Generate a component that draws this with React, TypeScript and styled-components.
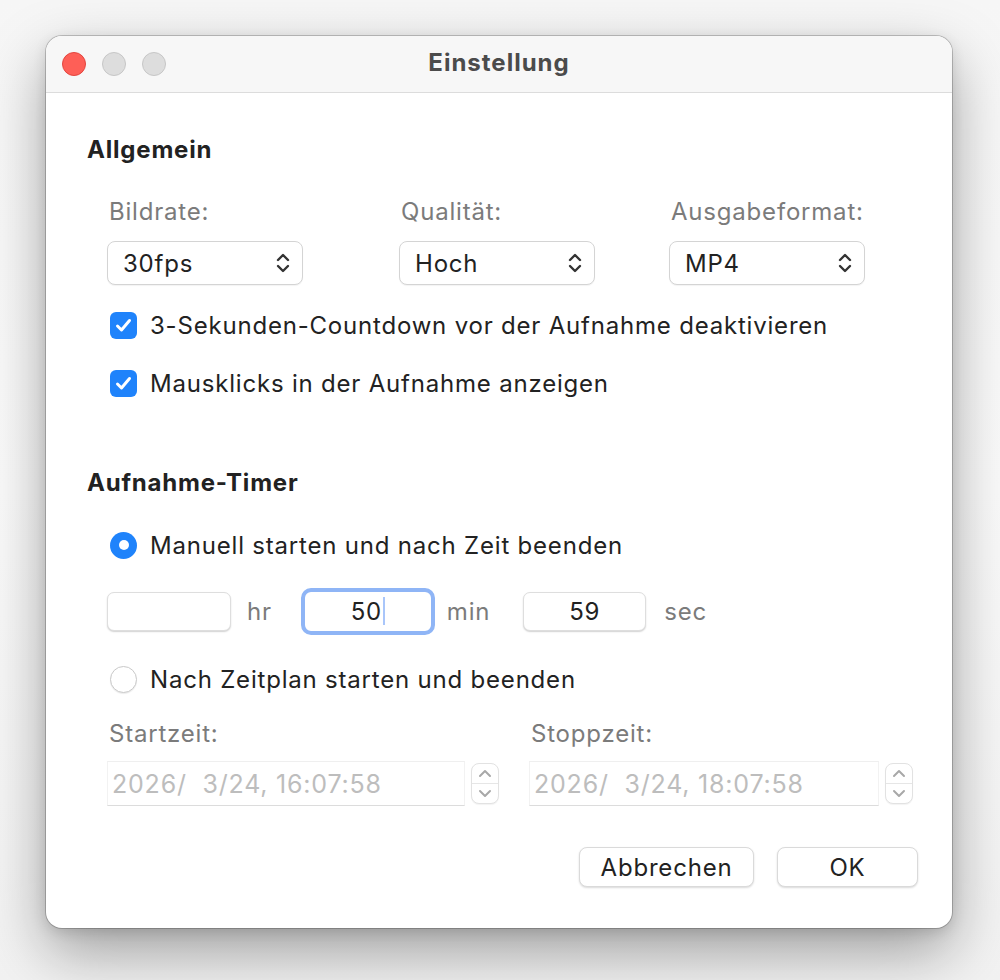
import React from 'react';
import styled, { createGlobalStyle } from 'styled-components';

const GlobalStyle = createGlobalStyle`
  html, body {
    margin: 0;
    padding: 0;
    background: #ffffff;
  }
  body {
    font-family: Inter, "Noto Sans", "Liberation Sans", sans-serif;
    color: #222;
    letter-spacing: 0.8px;
  }
`;

const Page = styled.div`
  padding: 36px 48px 0 46px;
  width: 1000px;
  height: 980px;
  box-sizing: border-box;
  background: linear-gradient(180deg, #f6f6f6 0%, #fafafa 50%, #f2f2f2 100%);
`;

const Window = styled.div`
  width: 906px;
  height: 892px;
  box-sizing: border-box;
  background: #fff;
  border-radius: 16px;
  box-shadow: 0 0 0 1px rgba(0, 0, 0, 0.2), 0 24px 60px rgba(0, 0, 0, 0.35), 0 4px 14px rgba(0, 0, 0, 0.12);
  overflow: hidden;
  display: flex;
  flex-direction: column;
`;

const TitleBar = styled.div`
  height: 56px;
  flex: none;
  background: #f7f7f7;
  border-bottom: 1px solid #dcdcdc;
  display: grid;
  grid-template-columns: 1fr auto 1fr;
  align-items: center;
  padding: 0 16px;
`;

const Lights = styled.div`
  display: flex;
  gap: 16px;
`;

const Light = styled.span<{ $color: string; $edge: string }>`
  width: 24px;
  height: 24px;
  border-radius: 50%;
  box-sizing: border-box;
  background: ${p => p.$color};
  border: 1px solid ${p => p.$edge};
`;

const Title = styled.div`
  font-size: 24px;
  font-weight: 700;
  color: #4b4b4b;
  letter-spacing: 1px;
  margin-top: -3px;
`;

const Body = styled.div`
  padding: 43px 34px 0 41px;
  display: flex;
  flex-direction: column;
`;

const SectionHeading = styled.div<{ $top?: number }>`
  font-size: 24px;
  line-height: 28px;
  font-weight: 700;
  color: #222;
  margin-top: ${p => p.$top ?? 0}px;
`;

const FormatGrid = styled.div`
  display: grid;
  grid-template-columns: 292px 270px 196px;
  margin: 34px 0 0 20px;
`;

const Field = styled.div<{ $gap?: number }>`
  display: flex;
  flex-direction: column;
  gap: ${p => p.$gap ?? 15}px;
`;

const Label = styled.div`
  font-size: 24px;
  line-height: 28px;
  color: #7b7b7b;
  padding-left: 2px;
`;

const Select = styled.div`
  width: 196px;
  height: 44px;
  box-sizing: border-box;
  border: 1px solid #d4d4d4;
  border-radius: 8px;
  background: #fff;
  box-shadow: 0 1px 1px rgba(0, 0, 0, 0.05);
  display: flex;
  align-items: center;
  justify-content: space-between;
  padding: 0 11px 0 15px;
  font-size: 24px;
  color: #222;
`;

const CheckRow = styled.div<{ $top: number }>`
  display: flex;
  align-items: center;
  gap: 13px;
  height: 36px;
  margin: ${p => p.$top}px 0 0 23px;
  font-size: 24px;
  color: #222;
`;

const CheckBox = styled.span`
  width: 27px;
  height: 27px;
  border-radius: 6px;
  background: #1f83fb;
  display: flex;
  align-items: center;
  justify-content: center;
  flex: none;
`;

const Radio = styled.span<{ $on?: boolean }>`
  width: 27px;
  height: 27px;
  border-radius: 50%;
  box-sizing: border-box;
  flex: none;
  background: ${p => (p.$on ? '#1f83fb' : '#fff')};
  border: ${p => (p.$on ? 'none' : '1px solid #c9c9c9')};
  box-shadow: ${p => (p.$on ? 'none' : '0 1px 1px rgba(0,0,0,0.08)')};
  display: flex;
  align-items: center;
  justify-content: center;
  &::after {
    content: '';
    display: ${p => (p.$on ? 'block' : 'none')};
    width: 10px;
    height: 10px;
    border-radius: 50%;
    background: #fff;
  }
`;

const TimeRow = styled.div`
  display: flex;
  align-items: center;
  height: 44px;
  margin: 26px 0 0 20px;
`;

const TimeInput = styled.div<{ $focus?: boolean; $w: number }>`
  width: ${p => p.$w}px;
  height: ${p => (p.$focus ? 47 : 39)}px;
  box-sizing: border-box;
  border-radius: ${p => (p.$focus ? 10 : 7)}px;
  background: #fff;
  border: ${p => (p.$focus ? '4px solid #8fb5f6' : '1px solid #dedede')};
  box-shadow: ${p => (p.$focus ? 'none' : '0 1px 1.5px rgba(0,0,0,0.18)')};
  display: flex;
  align-items: center;
  justify-content: center;
  font-size: 24px;
  color: #222;
  flex: none;
`;

const Caret = styled.span`
  width: 2px;
  height: 28px;
  background: #a9c6fa;
  margin-left: 1px;
`;

const Unit = styled.span<{ $left: number; $right: number }>`
  font-size: 24px;
  color: #7b7b7b;
  margin: 0 ${p => p.$right}px 0 ${p => p.$left}px;
`;

const ScheduleGrid = styled.div`
  display: grid;
  grid-template-columns: 422px 384px;
  margin: 23px 0 0 20px;
`;

const DateRow = styled.div`
  display: flex;
  align-items: center;
  gap: 6px;
`;

const DateInput = styled.div<{ $w: number }>`
  width: ${p => p.$w}px;
  height: 45px;
  box-sizing: border-box;
  background: #fff;
  border-top: 1px solid #efefef;
  border-left: 1px solid #f2f2f2;
  border-right: 1px solid #f2f2f2;
  border-bottom: 1px solid #dcdcdc;
  display: flex;
  align-items: center;
  padding-left: 4px;
  font-size: 25px;
  color: #bdbdbd;
  white-space: pre;
`;

const Stepper = styled.div`
  width: 28px;
  height: 41px;
  box-sizing: border-box;
  border: 1px solid #e2e2e2;
  border-radius: 8px;
  background: #fff;
  box-shadow: 0 1px 1px rgba(0, 0, 0, 0.05);
  display: flex;
  flex-direction: column;
  overflow: hidden;
`;

const StepHalf = styled.div<{ $top?: boolean }>`
  flex: 1;
  display: flex;
  align-items: center;
  justify-content: center;
  border-bottom: ${p => (p.$top ? '1px solid #e6e6e6' : 'none')};
`;

const ButtonRow = styled.div`
  display: flex;
  justify-content: flex-end;
  gap: 23px;
  margin-top: 41px;
`;

const Button = styled.div<{ $w: number }>`
  width: ${p => p.$w}px;
  height: 40px;
  box-sizing: border-box;
  border-radius: 8px;
  background: #fff;
  border: 1px solid #dadada;
  box-shadow: 0 1px 2px rgba(0, 0, 0, 0.15);
  display: flex;
  align-items: center;
  justify-content: center;
  font-size: 24px;
  color: #222;
`;

const UpDown = () => (
  <svg width="16" height="22" viewBox="0 0 16 22" fill="none">
    <path d="M3 8 L8 3 L13 8" stroke="#333" strokeWidth="2.4" strokeLinecap="round" strokeLinejoin="round" />
    <path d="M3 14 L8 19 L13 14" stroke="#333" strokeWidth="2.4" strokeLinecap="round" strokeLinejoin="round" />
  </svg>
);

const Check = () => (
  <svg width="19" height="19" viewBox="0 0 19 19" fill="none">
    <path d="M3.5 10 L7.5 14 L15.5 4.5" stroke="#fff" strokeWidth="3" strokeLinecap="round" strokeLinejoin="round" />
  </svg>
);

const Chevron = ({ up }: { up?: boolean }) => (
  <svg width="14" height="9" viewBox="0 0 14 9" fill="none">
    <path
      d={up ? 'M2 7 L7 2 L12 7' : 'M2 2 L7 7 L12 2'}
      stroke="#a8a8a8"
      strokeWidth="2"
      strokeLinecap="round"
      strokeLinejoin="round"
    />
  </svg>
);

const DateField = ({ value, width }: { value: string; width: number }) => (
  <DateRow>
    <DateInput $w={width}>{value}</DateInput>
    <Stepper>
      <StepHalf $top>
        <Chevron up />
      </StepHalf>
      <StepHalf>
        <Chevron />
      </StepHalf>
    </Stepper>
  </DateRow>
);

export default function App() {
  return (
    <>
      <GlobalStyle />
      <Page>
        <Window>
          <TitleBar>
            <Lights>
              <Light $color="#fe5f57" $edge="#e2463f" />
              <Light $color="#dddddd" $edge="#c6c6c6" />
              <Light $color="#dddddd" $edge="#c6c6c6" />
            </Lights>
            <Title>Einstellung</Title>
            <span />
          </TitleBar>
          <Body>
            <SectionHeading>Allgemein</SectionHeading>
            <FormatGrid>
              <Field>
                <Label>Bildrate:</Label>
                <Select>
                  30fps
                  <UpDown />
                </Select>
              </Field>
              <Field>
                <Label>Qualität:</Label>
                <Select>
                  Hoch
                  <UpDown />
                </Select>
              </Field>
              <Field>
                <Label>Ausgabeformat:</Label>
                <Select>
                  MP4
                  <UpDown />
                </Select>
              </Field>
            </FormatGrid>
            <CheckRow $top={22}>
              <CheckBox>
                <Check />
              </CheckBox>
              3-Sekunden-Countdown vor der Aufnahme deaktivieren
            </CheckRow>
            <CheckRow $top={22}>
              <CheckBox>
                <Check />
              </CheckBox>
              Mausklicks in der Aufnahme anzeigen
            </CheckRow>

            <SectionHeading $top={68}>Aufnahme-Timer</SectionHeading>
            <CheckRow $top={30}>
              <Radio $on />
              Manuell starten und nach Zeit beenden
            </CheckRow>
            <TimeRow>
              <TimeInput $w={124} />
              <Unit $left={16} $right={29}>hr</Unit>
              <TimeInput $w={134} $focus>
                50
                <Caret />
              </TimeInput>
              <Unit $left={12} $right={33}>min</Unit>
              <TimeInput $w={123}>59</TimeInput>
              <Unit $left={18} $right={0}>sec</Unit>
            </TimeRow>
            <CheckRow $top={28}>
              <Radio />
              Nach Zeitplan starten und beenden
            </CheckRow>
            <ScheduleGrid>
              <Field $gap={13}>
                <Label>Startzeit:</Label>
                <DateField value="2026/  3/24, 16:07:58" width={358} />
              </Field>
              <Field $gap={13}>
                <Label>Stoppzeit:</Label>
                <DateField value="2026/  3/24, 18:07:58" width={350} />
              </Field>
            </ScheduleGrid>
            <ButtonRow>
              <Button $w={175}>Abbrechen</Button>
              <Button $w={141}>OK</Button>
            </ButtonRow>
          </Body>
        </Window>
      </Page>
    </>
  );
}
